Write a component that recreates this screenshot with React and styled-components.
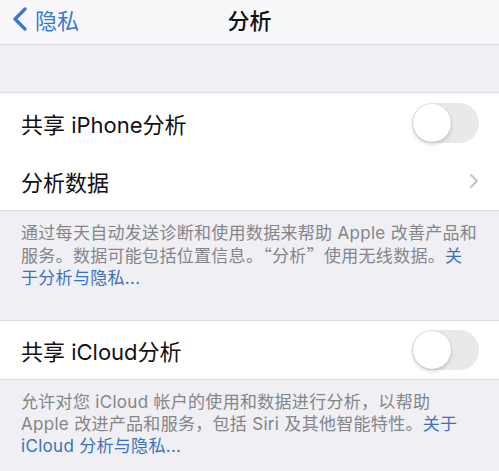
import React, { useState } from "react";
import styled, { createGlobalStyle } from "styled-components";

const GlobalStyle = createGlobalStyle`
  html, body {
    margin: 0;
    padding: 0;
    background: #efeff4;
  }
  body {
    font-family: "Inter", "Noto Sans CJK SC", sans-serif;
    -webkit-font-smoothing: antialiased;
  }
`;

const Page = styled.div`
  width: 499px;
  min-height: 471px;
  background: #efeff4;
`;

const NavBar = styled.header`
  height: 44px;
  display: grid;
  grid-template-columns: 1fr auto 1fr;
  align-items: center;
  background: #f8f8fa;
  border-bottom: 1px solid #dcdce0;
`;

const BackButton = styled.button`
  justify-self: start;
  display: flex;
  align-items: center;
  gap: 7px;
  padding: 0 0 6px 12px;
  border: none;
  background: none;
  color: #3b76d4;
  font: inherit;
  font-size: 22px;
  cursor: pointer;
`;

const Title = styled.h1`
  margin: 0;
  padding-bottom: 6px;
  font-size: 22px;
  font-weight: 500;
  color: #111;
`;

const Spacer = styled.div`
  height: ${(p) => p.h}px;
`;

const Group = styled.section`
  background: #fff;
  border-top: 1px solid #dcdce0;
  border-bottom: 1px solid #dcdce0;
`;

const Row = styled.div`
  height: ${(p) => p.h}px;
  display: flex;
  align-items: center;
  justify-content: space-between;
  padding: 0 20px 0 21px;
  font-size: 22px;
  color: #111;
  position: relative;

  & + &::before {
    content: "";
    position: absolute;
    top: 0;
    left: 21px;
    right: 0;
    border-top: 1px solid #e3e3e6;
  }
`;

const Track = styled.button`
  width: 67px;
  height: 40px;
  border-radius: 20px;
  border: none;
  padding: 1px;
  background: ${(p) => (p.on ? "#4cd964" : "#e9e9eb")};
  display: flex;
  justify-content: ${(p) => (p.on ? "flex-end" : "flex-start")};
  cursor: pointer;
`;

const Knob = styled.span`
  width: 38px;
  height: 38px;
  border-radius: 50%;
  background: #fff;
  box-shadow: 0 2px 4px rgba(0, 0, 0, 0.18), 0 0 0 0.5px rgba(0, 0, 0, 0.06);
`;

const Footer = styled.p`
  margin: 0;
  padding: ${(p) => p.pad};
  font-size: 17px;
  line-height: 22px;
  letter-spacing: 0.3px;
  color: #85858a;
`;

// full-width CJK quote marks
const Cjk = styled.span`
  font-family: "Noto Sans CJK SC", sans-serif;
`;

const Link = styled.a`
  color: #3c72bd;
  text-decoration: none;
`;

const Switch = ({ value }) => {
  const [on, setOn] = useState(value);
  return (
    <Track on={on ? 1 : 0} onClick={() => setOn(!on)}>
      <Knob />
    </Track>
  );
};

const BackChevron = () => (
  <svg width="16" height="24" viewBox="0 0 16 24">
    <path d="M13 2 L3 12 L13 22" fill="none" stroke="#3b76d4" strokeWidth="3.2" strokeLinecap="round" strokeLinejoin="round" />
  </svg>
);

const Disclosure = () => (
  <svg width="10" height="16" viewBox="0 0 10 16">
    <path d="M2 2 L8 8 L2 14" fill="none" stroke="#c4c4c8" strokeWidth="2" strokeLinecap="round" strokeLinejoin="round" />
  </svg>
);

export default function App() {
  return (
    <Page>
      <GlobalStyle />
      <NavBar>
        <BackButton>
          <BackChevron />
          隐私
        </BackButton>
        <Title>分析</Title>
        <div />
      </NavBar>

      <Spacer h={47} />

      <Group>
        <Row h={59}>
          共享 iPhone分析
          <Switch value={false} />
        </Row>
        <Row h={58}>
          分析数据
          <Disclosure />
        </Row>
      </Group>

      <Footer pad="11px 20px 31px 21px">
        通过每天自动发送诊断和使用数据来帮助 Apple 改善产品和
        <br />
        服务。数据可能包括位置信息。<Cjk>“</Cjk>分析<Cjk>”</Cjk>使用无线数据。<Link>关</Link>
        <br />
        <Link>于分析与隐私...</Link>
      </Footer>

      <Group>
        <Row h={58}>
          共享 iCloud分析
          <Switch value={false} />
        </Row>
      </Group>

      <Footer pad="11px 20px 10px 21px">
        允许对您 iCloud 帐户的使用和数据进行分析，以帮助
        <br />
        Apple 改进产品和服务，包括 Siri 及其他智能特性。<Link>关于</Link>
        <br />
        <Link>iCloud 分析与隐私...</Link>
      </Footer>
    </Page>
  );
}
